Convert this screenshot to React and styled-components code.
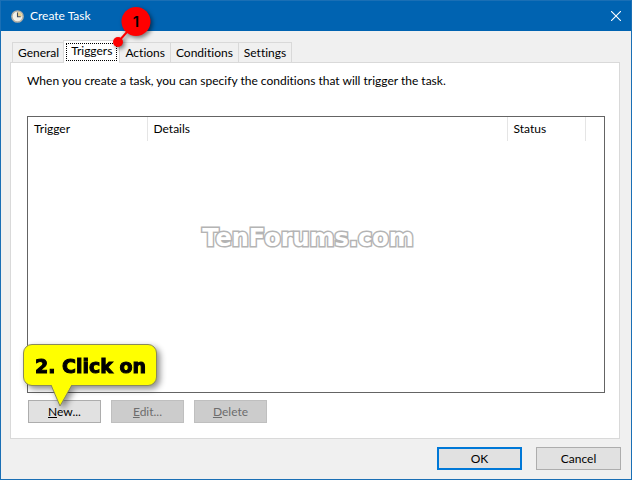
import React, {useState} from 'react';
import styled, {createGlobalStyle} from 'styled-components';

const GlobalStyle = createGlobalStyle`
  * {
    box-sizing: border-box;
  }

  body {
    margin: 0;
    font-family: Lato, 'Open Sans', sans-serif;
    font-size: 12px;
    font-variant-ligatures: none;
    line-height: 16px;
    color: #000;
  }

  button {
    font: inherit;
    color: inherit;
  }
`;

const Window = styled.div`
  display: flex;
  flex-direction: column;
  min-height: 100vh;
  border: 1px solid #1a6fb5;
  background: #f0f0f0;
`;

const TitleBar = styled.header`
  display: flex;
  align-items: center;
  gap: 6px;
  height: 30px;
  padding-left: 10px;
  background: #0063b1;
  color: #fff;
`;

const Title = styled.h1`
  flex: 1;
  margin: 0;
  font-size: 12px;
  font-weight: 400;
`;

const CloseButton = styled.button`
  display: flex;
  align-items: center;
  justify-content: center;
  width: 30px;
  height: 30px;
  padding: 0;
  border: 0;
  background: transparent;
`;

const Content = styled.main`
  display: flex;
  flex: 1;
  flex-direction: column;
  padding: 9px 10px 9px 9px;
`;

const TabList = styled.div`
  display: flex;
  align-items: flex-end;
  padding-left: 2px;
`;

const Tab = styled.button`
  position: relative;
  height: ${({$active}) => ($active ? '23px' : '20px')};
  margin-bottom: ${({$active}) => ($active ? '-1px' : '0')};
  margin-left: ${({$active}) => ($active ? '-2px' : '0')};
  padding: ${({$active}) => ($active ? '2px' : '0 5px')};
  border: 1px solid #d9d9d9;
  border-bottom: 0;
  border-left-width: ${({$first, $active}) => ($first || $active ? '1px' : '0')};
  background: ${({$active}) => ($active ? '#fff' : '#f0f0f0')};
  white-space: nowrap;
  z-index: ${({$active}) => ($active ? 1 : 0)};
`;

const FocusRing = styled.span`
  display: block;
  height: 18px;
  padding: 0 4px;
  border: 1px dotted #000;
  line-height: 14px;
`;

const Marker = styled.span`
  position: absolute;
  top: -36px;
  right: -38px;
  width: 46px;
  height: 46px;
  pointer-events: none;
`;

const MarkerNumber = styled.text`
  font-family: Inter, 'Liberation Sans', sans-serif;
  font-size: 15px;
  font-weight: 600;
`;

const Panel = styled.section`
  display: flex;
  flex: 1;
  flex-direction: column;
  margin-right: 1px;
  padding: 10px 14px 15px 16px;
  border: 1px solid #d9d9d9;
  background: #fff;
`;

const Description = styled.p`
  margin: 0 0 27px;
`;

const ListFrame = styled.div`
  display: flex;
  flex: 1;
  flex-direction: column;
  border: 1px solid #646464;
`;

const List = styled.table`
  width: 100%;
  border-collapse: collapse;
  table-layout: fixed;
`;

const HeaderCell = styled.th`
  width: ${({$width}) => $width || 'auto'};
  height: 24px;
  padding: 0 6px;
  border-right: ${({$last}) => ($last ? '0' : '1px solid #e5e5e5')};
  font-weight: 400;
  text-align: left;
`;

const Watermark = styled.div`
  display: flex;
  flex: 1;
  align-items: center;
  justify-content: center;
  padding: 0 16px 58px 0;
  font-family: 'DejaVu Sans', sans-serif;
  font-size: 24px;
  font-weight: 700;
  line-height: 32px;
  color: #fff;
  paint-order: stroke;
  -webkit-text-stroke: 3px #b4b4b4;
`;

const Actions = styled.div`
  display: flex;
  gap: 10px;
  padding: 7px 0 0 1px;
`;

const ActionSlot = styled.div`
  position: relative;
`;

const Button = styled.button`
  width: ${({$wide}) => ($wide ? '85px' : '73px')};
  height: 23px;
  padding: 0;
  border: ${({$primary}) => ($primary ? '2px solid #0078d7' : '1px solid #adadad')};
  background: #e1e1e1;

  &:disabled {
    border-color: #bfbfbf;
    background: #ccc;
    color: #6d6d6d;
  }
`;

const Callout = styled.div`
  position: absolute;
  bottom: 37px;
  left: -5px;
  padding: 9px 10px 7px 11px;
  border: 1px solid #8a8a5c;
  border-radius: 9px;
  background: #ff0;
  filter: drop-shadow(3px 3px 3px rgba(0, 0, 0, 0.45));
  font-family: 'DejaVu Sans', sans-serif;
  font-size: 19px;
  font-weight: 700;
  line-height: 24px;
  -webkit-text-stroke: 1px #000;
  white-space: nowrap;
  pointer-events: none;
`;

const CalloutTail = styled.svg`
  position: absolute;
  top: 39px;
  left: 27px;
`;

const Footer = styled.footer`
  display: flex;
  justify-content: flex-end;
  gap: 14px;
  padding-top: 8px;
`;

const tabs = ['General', 'Triggers', 'Actions', 'Conditions', 'Settings'];

const ClockIcon = () => (
  <svg width="13" height="13" viewBox="0 0 13 13" aria-hidden="true">
    <circle cx="6.5" cy="6.5" r="5.6" fill="#f2f0e8" stroke="#b5b0a6" strokeWidth="1.5" />
    <path d="M6.5 6.5V2a4.5 4.5 0 0 1 4.5 4.5z" fill="#e9cf8a" />
    <path d="M6.5 2.5v4.3h3.2" fill="none" stroke="#3e4a5c" strokeWidth="1.1" />
  </svg>
);

const CloseIcon = () => (
  <svg width="10" height="10" viewBox="0 0 10 10" aria-hidden="true">
    <path d="M0 0l10 10M10 0L0 10" stroke="#fff" strokeWidth="1.1" />
  </svg>
);

const StepMarker = () => (
  <Marker>
    <svg width="46" height="46" viewBox="0 0 46 46" overflow="visible">
      <g style={{filter: 'drop-shadow(2px 2px 2px rgba(0, 0, 0, 0.5))'}}>
        <path d="M7 37L25 17" stroke="#f00" strokeWidth="2" />
        <circle cx="7" cy="37" r="5" fill="#f00" />
        <circle cx="25" cy="16.5" r="14.5" fill="#f00" />
      </g>
      <MarkerNumber x="25" y="22" textAnchor="middle">
        1
      </MarkerNumber>
    </svg>
  </Marker>
);

const App = () => {
  const [activeTab, setActiveTab] = useState('Triggers');

  return (
    <>
      <GlobalStyle />
      <Window>
        <TitleBar>
          <ClockIcon />
          <Title>Create Task</Title>
          <CloseButton type="button" aria-label="Close">
            <CloseIcon />
          </CloseButton>
        </TitleBar>
        <Content>
          <TabList role="tablist">
            {tabs.map((tab, index) => (
              <Tab
                key={tab}
                type="button"
                role="tab"
                aria-selected={tab === activeTab}
                $active={tab === activeTab}
                $first={index === 0}
                onClick={() => setActiveTab(tab)}
              >
                {tab === activeTab ? <FocusRing>{tab}</FocusRing> : tab}
                {tab === 'Triggers' && <StepMarker />}
              </Tab>
            ))}
          </TabList>
          <Panel role="tabpanel">
            <Description>
              When you create a task, you can specify the conditions that will trigger the task.
            </Description>
            <ListFrame>
              <List>
                <thead>
                  <tr>
                    <HeaderCell $width="119px">Trigger</HeaderCell>
                    <HeaderCell>Details</HeaderCell>
                    <HeaderCell $width="78px">Status</HeaderCell>
                    <HeaderCell as="td" $width="19px" $last />
                  </tr>
                </thead>
              </List>
              <Watermark>TenForums.com</Watermark>
            </ListFrame>
            <Actions>
              <ActionSlot>
                <Button type="button">
                  <u>N</u>ew...
                </Button>
                <Callout>
                  2. Click on
                  <CalloutTail width="22" height="24" viewBox="0 0 22 24">
                    <path d="M0 0L9 22L21 0" fill="#ff0" />
                    <path d="M0 1L9 22L21 1" fill="none" stroke="#8a8a5c" />
                  </CalloutTail>
                </Callout>
              </ActionSlot>
              <Button type="button" disabled>
                <u>E</u>dit...
              </Button>
              <Button type="button" disabled>
                <u>D</u>elete
              </Button>
            </Actions>
          </Panel>
          <Footer>
            <Button type="button" $wide $primary>
              OK
            </Button>
            <Button type="button" $wide>
              Cancel
            </Button>
          </Footer>
        </Content>
      </Window>
    </>
  );
};

export default App;
